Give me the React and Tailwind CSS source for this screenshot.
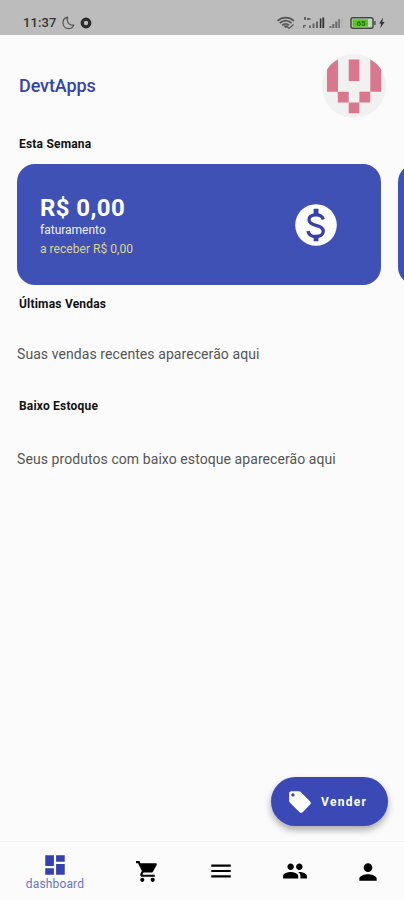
import React from 'react';
import {
  MdDashboard,
  MdShoppingCart,
  MdMenu,
  MdPerson,
  MdLocalOffer,
} from 'react-icons/md';

function StatusBar() {
  return (
    <div className="h-[35px] shrink-0 bg-[#bcbcbc] flex items-end justify-between pl-[23px] pr-[18px] pb-[4px]">
      <div className="flex items-center h-4">
        <span className="text-[13px] leading-4 font-medium tracking-[0.1px] text-[#333] w-[39px]">11:37</span>
        <svg width="13" height="14" viewBox="0 0 13 14" fill="none" stroke="#555" strokeWidth="1.2" strokeLinejoin="round">
          <path d="M5.5 1.2C2.800 1.800 1 4 1 6.900c0 3.300 2.400 5.700 5.500 5.700 2.400 0 4.500-1.400 5.300-3.500C8 9.800 4.300 7 5.500 1.200z" />
        </svg>
        <svg width="12" height="12" viewBox="0 0 12 12" className="ml-[5px]">
          <circle cx="6" cy="6" r="3.800" fill="none" stroke="#2b2b2b" strokeWidth="3.200" />
        </svg>
      </div>
      <svg width="110" height="16" viewBox="276 15 110 16">
        <g fill="none" stroke="#555" strokeWidth="1.700">
          <path d="M277.500 20.800c5-4.200 11.500-4.200 16.500 0" />
          <path d="M279.800 23c3.600-3 8.200-3 11.800 0" />
          <path d="M282 25.200c2.300-1.800 5-1.800 7.200 0" />
          <path d="M287 26.500l2 2 4.500-4" strokeWidth="1.200" />
        </g>
        <path d="M283 25.500h5.500l-2.700 2.800z" fill="#555" />
        <g fill="#666">
          <path d="M304 17h2v3h-2zM307 18h3.500v2H307zM303 25h3v1.200h-1.700V28H303z" />
          <path d="M309 25.500h2V28h-2zM312.500 23.500h2V28h-2zM316 21.500h2V28h-2z" />
          <path d="M319.800 18.500h1.600V28h-1.600zM322.400 17.500h1.800V28h-1.800z" fill="#333" />
          <path d="M329.500 26h1.800v2h-1.800zM332.300 24h2v4h-2zM335.300 21.500h2V28h-2zM338.300 19h1.500v9h-1.500z" />
          <path d="M341.500 18h.8v10h-.8z" fill="#a5a5a5" />
        </g>
        <rect x="351" y="17.800" width="22" height="10.400" rx="2" fill="#c8d6c0" stroke="#444" strokeWidth="1.500" />
        <rect x="352.500" y="19.300" width="15.500" height="7.400" fill="#55c61c" />
        <rect x="374" y="21" width="1.800" height="4" fill="#666" />
        <text x="361" y="26" textAnchor="middle" fontSize="8" fontWeight="700" fill="#2d6a16">65</text>
        <path d="M383 17.500l-3.800 6h2l-.9 4.800 4.300-6.300h-2.200z" fill="#333" />
      </svg>
    </div>
  );
}

function Avatar() {
  return (
    <svg width="64" height="64" viewBox="0 0 64 64">
      <defs>
        <clipPath id="avatar">
          <circle cx="32" cy="32" r="32" />
        </clipPath>
      </defs>
      <g clipPath="url(#avatar)">
        <rect width="64" height="64" fill="#f1f1f1" />
        <path
          fill="#d9778c"
          d="M16 5.500V37.800H5V15.500Q9 9 16 5.500zM26.700 5.500h10.700v21.500H26.700zM48.300 5.500Q55 9 59.300 15.500V37.800H48.300zM15.800 37.800h10.900v10.700H15.800zM37.400 37.800h10.900v10.700H37.400zM26.700 48.500h10.700v10.700H26.700z"
        />
      </g>
    </svg>
  );
}

function MoneyIcon() {
  return (
    <svg width="42" height="42" viewBox="0 0 42 42">
      <circle cx="21" cy="21" r="20.800" fill="#fff" />
      <path
        d="M28.300 15.500C27.500 12.200 25 10.800 21 10.800c-4.300 0-7 1.900-7 5 0 3.300 2.600 4.500 7 5.600 4.600 1.100 7.300 2.500 7.300 5.900 0 3.300-3 5.200-7.300 5.200-4.600 0-7.400-1.800-8-5.600"
        fill="none"
        stroke="#3442a8"
        strokeWidth="3.300"
      />
      <path d="M18.600 4.800h4.900v5.700h-4.900zM18.600 32h4.900v5.300h-4.900z" fill="#3442a8" />
    </svg>
  );
}

function PeopleIcon() {
  return (
    <svg width="26" height="26" viewBox="0 0 24 24" fill="currentColor">
      <path d="M16 11c1.660 0 2.990-1.340 2.990-3S17.660 5 16 5c-1.660 0-3 1.340-3 3s1.340 3 3 3zm-8 0c1.660 0 2.990-1.340 2.990-3S9.660 5 8 5C6.340 5 5 6.340 5 8s1.340 3 3 3zm0 2c-2.330 0-7 1.170-7 3.500V19h14v-2.500c0-2.330-4.670-3.500-7-3.500zm8 0c-.29 0-.62.020-.97.050 1.160.840 1.970 1.970 1.970 3.450V19h6v-2.500c0-2.330-4.670-3.500-7-3.500z" />
    </svg>
  );
}

function SectionTitle({ children }) {
  return <h2 className="pl-[19px] text-[12px] leading-[16px] font-bold tracking-[0.2px] text-[#111]">{children}</h2>;
}

export default function App() {
  return (
    <div className="relative w-[404px] h-[900px] overflow-hidden flex flex-col bg-[#fbfbfb] font-['Roboto',sans-serif]">
      <StatusBar />

      <header className="mt-[19px] h-[64px] shrink-0 flex items-center justify-between pl-[19px] pr-[18px]">
        <h1 className="text-[18px] leading-[26px] font-medium tracking-[-0.1px] text-[#3543ad]">DevtApps</h1>
        <Avatar />
      </header>

      <main className="flex-1 flex flex-col pt-[18px]">
        <SectionTitle>Esta Semana</SectionTitle>
        <div className="mt-[12px] pl-[17px] flex gap-[17px] overflow-hidden">
          <div className="w-[364px] h-[121px] shrink-0 rounded-[18px] bg-[#3f51b5] flex items-center justify-between pl-[23px] pr-[44px]">
            <div className="pt-[2px]">
              <p className="text-[24px] leading-[28px] font-bold tracking-[0.4px] text-white">R$ 0,00</p>
              <p className="text-[12px] leading-[16px] text-[#eef0fb]">faturamento</p>
              <p className="mt-[3px] text-[12px] leading-[16px] tracking-[0.04px] text-[#ded68a]">a receber R$ 0,00</p>
            </div>
            <MoneyIcon />
          </div>
          <div className="w-[364px] h-[121px] shrink-0 rounded-[18px] bg-[#3f51b5]" />
        </div>

        <div className="mt-[11px]">
          <SectionTitle>Últimas Vendas</SectionTitle>
          <p className="mt-[32px] pl-[17px] text-[14px] leading-[20px] tracking-[0.075px] text-[#555]">Suas vendas recentes aparecerão aqui</p>
        </div>

        <div className="mt-[34px]">
          <SectionTitle>Baixo Estoque</SectionTitle>
          <p className="mt-[35px] pl-[17px] text-[14px] leading-[20px] tracking-[0.075px] text-[#555]">Seus produtos com baixo estoque aparecerão aqui</p>
        </div>
      </main>

      <button className="absolute right-[16px] bottom-[74px] w-[117px] h-[49px] rounded-full bg-[#3a49b6] shadow-[0_4px_7px_rgba(0,0,0,0.32)] flex items-center pl-[16px] text-white">
        <MdLocalOffer size={26} />
        <span className="ml-[8px] text-[12px] font-bold tracking-[1.3px]">Vender</span>
      </button>

      <nav className="h-[59px] shrink-0 border-t border-[#f0f0f0] flex items-center text-black">
        <a className="w-[110px] flex flex-col items-center text-[#3441b0]">
          <MdDashboard size={26} />
          <span className="text-[12px] leading-[12px] tracking-[0.15px] text-[#6b74c0]">dashboard</span>
        </a>
        <a className="w-[74px] flex justify-center"><MdShoppingCart size={25} /></a>
        <a className="w-[74px] flex justify-center"><MdMenu size={26} /></a>
        <a className="w-[73px] flex justify-center"><PeopleIcon /></a>
        <a className="w-[73px] flex justify-center pt-px"><MdPerson size={26} /></a>
      </nav>
    </div>
  );
}
